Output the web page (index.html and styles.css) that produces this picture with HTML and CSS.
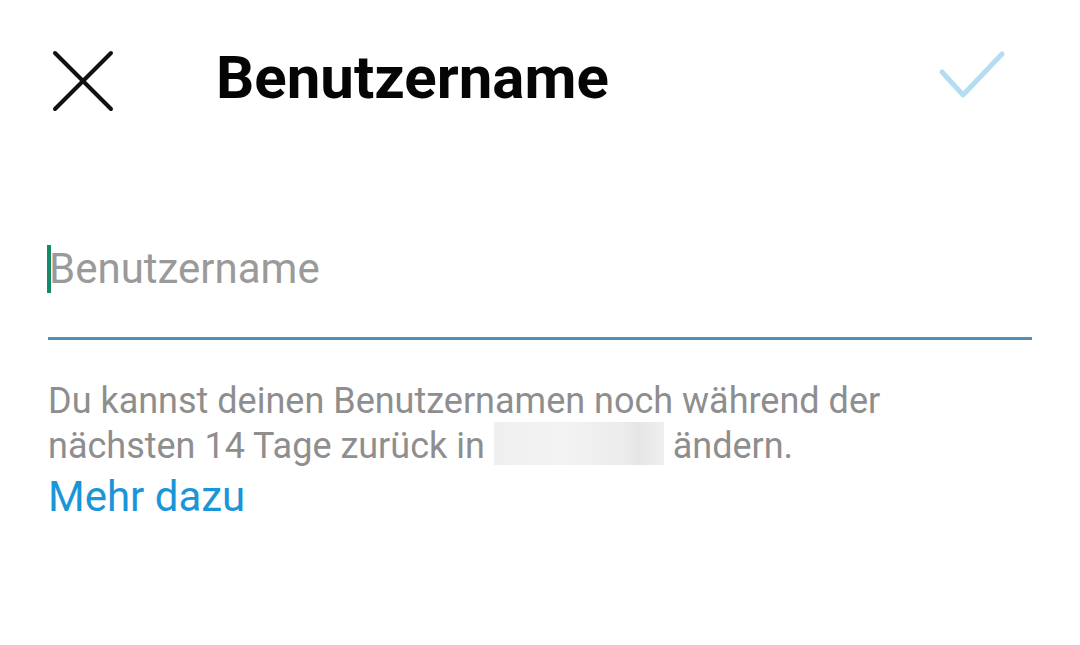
FILE: index.html
```html
<!DOCTYPE html>
<html lang="de">
<head>
    <meta charset="UTF-8">
    <meta name="viewport" content="width=device-width, initial-scale=1.0">
    <title>Benutzername</title>
    <link rel="stylesheet" href="styles.css">
</head>
<body>
    <!-- Kopfzeile mit Schließen, Titel und Bestätigen -->
    <div class="topbar">
        <svg class="icon-close" width="64" height="64" viewBox="0 0 64 64">
            <line x1="4" y1="4" x2="60" y2="60" />
            <line x1="60" y1="4" x2="4" y2="60" />
        </svg>
        <h1 class="title">Benutzername</h1>
        <svg class="icon-check" width="72" height="64" viewBox="0 0 72 64">
            <polyline points="6,23 27,46 66,5" />
        </svg>
    </div>

    <!-- Eingabefeld -->
    <div class="field">
        <div class="input-row">
            <span class="cursor"></span>
            <span class="placeholder">Benutzername</span>
        </div>
    </div>

    <!-- Hinweistext -->
    <p class="hint">Du kannst deinen Benutzernamen noch während der<br>nächsten 14 Tage zurück in <span class="blur"></span> ändern.</p>
    <a class="more" href="#">Mehr dazu</a>
</body>
</html>
```

FILE: styles.css
```css
/* Grundlayout */
body {
    margin: 0;
    background-color: #fff;
    font-family: Roboto, "Noto Sans", sans-serif;
    color: #000;
}

/* Kopfzeile */
.topbar {
    display: flex;
    align-items: center;
    height: 162px;
    padding: 0 72px 0 51px;
}

.icon-close line {
    stroke: #111;
    stroke-width: 4;
    stroke-linecap: round;
}

.title {
    margin: 0 0 6px 101px;
    font-size: 60px;
    line-height: 1;
    font-weight: 700;
    color: #050505;
}

.icon-check {
    margin-left: auto;
}

.icon-check polyline {
    fill: none;
    stroke: #b5ddf2;
    stroke-width: 5;
    stroke-linecap: round;
    stroke-linejoin: round;
}

/* Eingabefeld */
.field {
    margin: 83px 48px 0 48px;
    padding-bottom: 44px;
    border-bottom: 3px solid #4f90b8;
}

.input-row {
    position: relative;
    height: 48px;
    display: flex;
    align-items: center;
}

.cursor {
    position: absolute;
    left: -1px;
    top: 0;
    width: 4px;
    height: 48px;
    background-color: #148a6b;
}

.placeholder {
    font-size: 42px;
    line-height: 48px;
    color: #9a9a9a;
    padding-left: 1px;
}

/* Hinweistext */
.hint {
    margin: 40px 48px 0 48px;
    font-size: 36px;
    line-height: 42px;
    color: #8e8e8e;
}

.blur {
    display: inline-block;
    width: 170px;
    height: 43px;
    vertical-align: -7px;
    background: linear-gradient(90deg, #efefef 0%, #f3f3f3 40%, #ececec 75%, #e6e6e6 85%, #efefef 100%);
}

.more {
    display: block;
    margin: 6px 48px 0 48px;
    font-size: 42px;
    line-height: 48px;
    color: #1a95d8;
    text-decoration: none;
}
```
